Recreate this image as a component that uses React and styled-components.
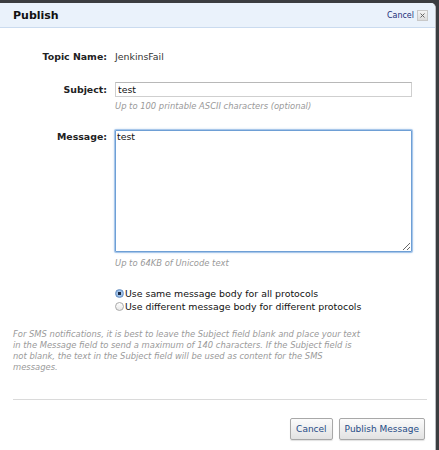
import React from 'react';
import styled, { createGlobalStyle } from 'styled-components';

const GlobalStyle = createGlobalStyle`
	html, body {
		margin: 0;
		padding: 0;
		background: #3b3d40;
		height: 100%;
		overflow: hidden;
	}
	body {
		font-family: "DejaVu Sans", Verdana, sans-serif;
	}
`;

const Dialog = styled.div`
	margin-top: 3px;
	width: 435px;
	min-height: 447px;
	background: #ffffff;
	border-top-right-radius: 5px;
	border-right: 1px solid #b9bcc0;
	overflow: hidden;
`;

const Header = styled.div`
	height: 24px;
	background: #eaf2fb;
	border-bottom: 1px solid #cadbef;
	display: flex;
	align-items: center;
	justify-content: space-between;
	padding: 0 7px 0 13px;
`;

const Title = styled.h1`
	margin: 0;
	font-size: 11px;
	font-weight: bold;
	color: #111;
`;

const HeaderActions = styled.div`
	display: flex;
	align-items: center;
	gap: 3px;
`;

const CancelLink = styled.a`
	font-size: 8px;
	color: #1d2f7a;
	text-decoration: none;
	cursor: pointer;
`;

const CloseBox = styled.span`
	width: 9px;
	height: 9px;
	border: 1px solid #c8c8c8;
	background: linear-gradient(#f4f4f4, #dcdcdc);
	display: flex;
	align-items: center;
	justify-content: center;
	svg {
		display: block;
	}
`;

const Form = styled.div`
	padding: 23px 24px 0 0;
`;

const Row = styled.div`
	display: grid;
	grid-template-columns: 107px 1fr;
	column-gap: 8px;
	align-items: ${props => (props.top ? 'start' : 'center')};
	margin-top: ${props => props.gap || 0}px;
`;

const Label = styled.label`
	text-align: right;
	font-size: 9.4px;
	line-height: 12px;
	font-weight: bold;
	color: #222;
	padding-top: ${props => props.offset || 0}px;
`;

const Value = styled.span`
	font-size: 9.4px;
	line-height: 12px;
	color: #333;
`;

const TextInput = styled.input`
	box-sizing: border-box;
	width: 297px;
	height: 15px;
	margin: 0;
	padding: 0 2px;
	border: 1px solid #cfcfcf;
	border-top-color: #b8b8b8;
	font-family: "DejaVu Sans", Verdana, sans-serif;
	font-size: 9.4px;
	color: #111;
	outline: none;
`;

const Hint = styled.div`
	margin: ${props => props.gap || 0}px 0 0 115px;
	font-size: 8.4px;
	line-height: 12px;
	font-style: italic;
	color: #999;
`;

const MessageArea = styled.textarea`
	box-sizing: border-box;
	width: 297px;
	height: 122px;
	margin: 0;
	padding: 0 1px;
	border: 1px solid #6e9fd5;
	box-shadow: 0 0 0 1px #a8c7ea, 0 0 3px #8fb6e3;
	border-radius: 1px;
	font-family: "DejaVu Sans", Verdana, sans-serif;
	font-size: 9.4px;
	line-height: 11px;
	color: #111;
	outline: none;
	resize: both;
`;

const RadioGroup = styled.div`
	margin: 18px 0 0 115px;
	display: flex;
	flex-direction: column;
`;

const RadioLabel = styled.label`
	display: flex;
	align-items: center;
	font-size: 9.4px;
	line-height: 13px;
	color: #111;
`;

const Radio = styled.input`
	appearance: none;
	width: 9px;
	height: 9px;
	margin: 0 1px 0 0;
	border-radius: 50%;
	border: 1px solid ${props => (props.checked ? '#6b93c4' : '#a9a9a9')};
	background: ${props =>
		props.checked
			? 'radial-gradient(circle, #1b2a44 0 1.5px, #a7c6ea 2px, #6f9fd6 100%)'
			: 'linear-gradient(#ffffff, #e6e6e6)'};
`;

const Note = styled.p`
	margin: 16px 0 0 13px;
	font-size: 8.4px;
	line-height: 11px;
	font-style: italic;
	color: #9a9a9a;
`;

const Divider = styled.hr`
	margin: 26px 8px 0 13px;
	border: none;
	border-top: 1px solid #dadada;
`;

const Footer = styled.div`
	display: flex;
	justify-content: flex-end;
	gap: 6px;
	padding: 18px 10px 0 0;
`;

const Button = styled.button`
	height: 22px;
	padding: 0 5px;
	border: 1px solid #a8a8a8;
	border-radius: 2px;
	background: linear-gradient(#fbfbfb, #e2e2e2);
	box-shadow: 0 1px 1px rgba(0, 0, 0, 0.12);
	font-family: "DejaVu Sans", Verdana, sans-serif;
	font-size: 9px;
	color: #1f4b86;
	cursor: pointer;
`;

export default function App() {
	return (
		<>
			<GlobalStyle />
			<Dialog>
				<Header>
					<Title>Publish</Title>
					<HeaderActions>
						<CancelLink>Cancel</CancelLink>
						<CloseBox>
							<svg width="5" height="5" viewBox="0 0 5 5">
								<path d="M0.5 0.5L4.5 4.5M4.5 0.5L0.5 4.5" stroke="#666" strokeWidth="1" />
							</svg>
						</CloseBox>
					</HeaderActions>
				</Header>
				<Form>
					<Row>
						<Label>Topic Name:</Label>
						<Value>JenkinsFail</Value>
					</Row>
					<Row gap={19}>
						<Label>Subject:</Label>
						<TextInput defaultValue="test" />
					</Row>
					<Hint gap={3}>Up to 100 printable ASCII characters (optional)</Hint>
					<Row gap={18} top>
						<Label offset={1}>Message:</Label>
						<MessageArea defaultValue="test" />
					</Row>
					<Hint gap={5}>Up to 64KB of Unicode text</Hint>
					<RadioGroup>
						<RadioLabel>
							<Radio type="radio" name="body" checked readOnly />
							Use same message body for all protocols
						</RadioLabel>
						<RadioLabel>
							<Radio type="radio" name="body" checked={false} readOnly />
							Use different message body for different protocols
						</RadioLabel>
					</RadioGroup>
				</Form>
				<Note>
					For SMS notifications, it is best to leave the Subject field blank and place your text
					<br />
					in the Message field to send a maximum of 140 characters. If the Subject field is
					<br />
					not blank, the text in the Subject field will be used as content for the SMS
					<br />
					messages.
				</Note>
				<Divider />
				<Footer>
					<Button>Cancel</Button>
					<Button>Publish Message</Button>
				</Footer>
			</Dialog>
		</>
	);
}
